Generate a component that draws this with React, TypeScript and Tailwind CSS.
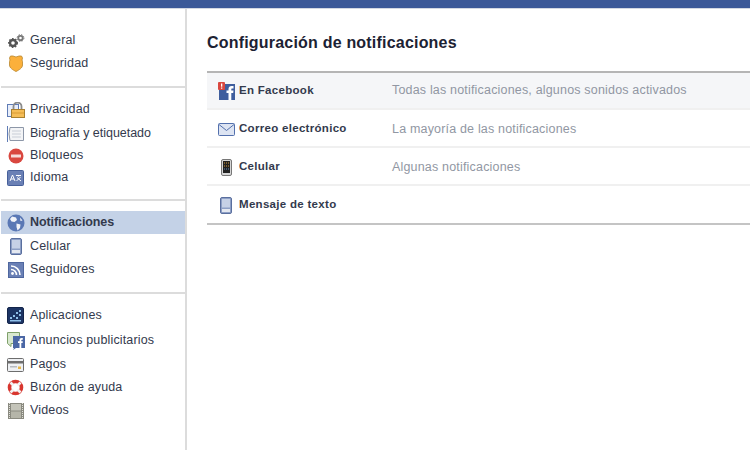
import React from "react";

const Gears = () => (
  <svg width="18" height="16" viewBox="0 0 18 16">
    <g fill="none" stroke="#555">
      <circle cx="6" cy="10" r="3" strokeWidth="2.4" />
      <circle cx="6" cy="10" r="4.4" strokeWidth="1.2" strokeDasharray="1.6 1.6" />
    </g>
    <g fill="none" stroke="#777">
      <circle cx="13.5" cy="5" r="2.2" strokeWidth="1.8" />
      <circle cx="13.5" cy="5" r="3.4" strokeWidth="1" strokeDasharray="1.4 1.3" />
    </g>
  </svg>
);

const Badge = () => (
  <svg width="16" height="17" viewBox="0 0 16 17">
    <path d="M2.500 1H5l3 1 3-1h2.500l1 2-.5 2 .5 1.500V10c0 3-3.500 5-6.500 6.500C5 15 1.500 13 1.500 10V6.500L2 5l-.5-2z" fill="#fbb03b" stroke="#b8862e" strokeWidth="0.8" />
  </svg>
);

const Lock = () => (
  <svg width="18" height="16" viewBox="0 0 18 16">
    <rect x="0.500" y="2.500" width="11" height="12" fill="#e8eefa" stroke="#5f7cb6" />
    <path d="M6.500 8V4.500a4 4 0 0 1 8 0V8" fill="none" stroke="#8b8b8b" strokeWidth="1.800" />
    <rect x="4.500" y="7.500" width="13" height="8" fill="#f5bd57" stroke="#a9802f" />
    <path d="M5 11h12" stroke="#d99a32" />
  </svg>
);

const Timeline = () => (
  <svg width="17" height="16" viewBox="0 0 17 16">
    <path d="M0.500 0v16" stroke="#5f7cb6" />
    <path d="M3 1.500h13.500v13H3l-1-6.500z" fill="#f3f4f6" stroke="#8d97a8" />
    <path d="M5 5h9M5 8h9M5 11h9" stroke="#c9ced7" />
  </svg>
);

const Block = () => (
  <svg width="16" height="16" viewBox="0 0 16 16">
    <circle cx="8" cy="8" r="7.500" fill="#d9473f" />
    <rect x="3" y="6.500" width="10" height="3" fill="#f6dcda" />
  </svg>
);

const Lang = () => (
  <svg width="17" height="16" viewBox="0 0 17 16">
    <rect x="0.500" y="0.500" width="16" height="15" rx="1" fill="#6a80b5" stroke="#47609a" />
    <path d="M3 11l2.500-6L8 11M4 9h3M9 5.500h5M11.500 5v1.500M9.500 11l4-4M10 7.500l4 3.500" fill="none" stroke="#fff" strokeWidth="1" />
  </svg>
);

const Globe = () => (
  <svg width="18" height="18" viewBox="0 0 18 18">
    <circle cx="9" cy="9" r="8.500" fill="#5a78b5" />
    <path d="M5 2.500l4 1 1 2.500-2.500 2-3-.5L3 5zM9.500 9.500l4 1-.5 3.500-2.500 2.500-1-3.500zM13 3.500l2.500 3-2 .5z" fill="#f1f3f8" />
  </svg>
);

const Phone = () => (
  <svg width="12" height="17" viewBox="0 0 12 17">
    <rect x="0.500" y="0.500" width="11" height="16" rx="1.500" fill="#8ea0c6" stroke="#5a6f9e" />
    <rect x="2" y="2" width="8" height="8.500" fill="#c6d1e6" />
    <rect x="2" y="12" width="8" height="3" fill="#e4e8f0" />
  </svg>
);

const Rss = () => (
  <svg width="16" height="16" viewBox="0 0 16 16">
    <rect x="0.500" y="0.500" width="15" height="15" fill="#6a80b5" stroke="#4f679f" />
    <circle cx="4.500" cy="11.500" r="1.400" fill="#fff" />
    <path d="M3 7.500a5.500 5.500 0 0 1 5.500 5.500M3 4a9 9 0 0 1 9 9" fill="none" stroke="#fff" strokeWidth="1.600" />
  </svg>
);

const Apps = () => (
  <svg width="17" height="17" viewBox="0 0 17 17">
    <rect x="0.500" y="0.500" width="16" height="16" rx="1.500" fill="#1d3464" stroke="#13244a" />
    <path d="M3 10h2v2H3zM6 8h2v2H6zM9 10h2v2H9zM12 3h2v2h-2zM12 7h2v2h-2zM3 13h11v1.500H3zM9 5h2v2H9z" fill="#8fc0ea" />
  </svg>
);

const AdsIcon = () => (
  <svg width="18" height="18" viewBox="0 0 18 18">
    <path d="M0.500 0.500h12v11H4v3l-3.500-3z" fill="#d8e8cf" stroke="#7fa06a" />
    <rect x="6" y="4" width="12" height="12" fill="#4b67a5" />
    <path d="M7 16l-1 2 3-2z" fill="#4b67a5" />
    <path d="M12.500 16v-5h-1.500V9.200h1.500V8c0-1.300.8-2 2-2h1.300v1.800h-.8c-.5 0-.7.2-.7.700v.700h1.500l-.2 1.800h-1.300v5z" fill="#fff" />
  </svg>
);

const Card = () => (
  <svg width="17" height="14" viewBox="0 0 17 14">
    <rect x="0.500" y="0.500" width="16" height="13" rx="1" fill="#eef0f3" stroke="#6d6d6d" />
    <rect x="1" y="3" width="15" height="2.500" fill="#6d6d6d" />
    <rect x="3" y="8" width="7" height="1.500" fill="#b5b9c0" />
    <rect x="11" y="8.500" width="3" height="2.500" fill="#e6b64a" />
  </svg>
);

const Buoy = () => (
  <svg width="17" height="17" viewBox="0 0 17 17">
    <circle cx="8.500" cy="8.500" r="6" fill="#fff" stroke="#d8362f" strokeWidth="3.600" />
    <path d="M3.500 3.500l3 3M13.500 3.500l-3 3M3.500 13.500l3-3M13.500 13.500l-3-3" stroke="#f2f2f2" strokeWidth="2.800" />
  </svg>
);

const Film = () => (
  <svg width="16" height="16" viewBox="0 0 16 16">
    <rect x="0" y="0" width="16" height="16" fill="#8a8a80" />
    <rect x="3" y="1" width="10" height="6.500" fill="#c4c4b9" />
    <rect x="3" y="8.500" width="10" height="6.500" fill="#b5b5a9" />
    <path d="M1.500 0v16M14.500 0v16" stroke="#e0e0d9" strokeWidth="1" strokeDasharray="1 1" />
  </svg>
);

const FbBadge = () => (
  <svg width="17" height="18" viewBox="0 0 17 18">
    <rect x="1" y="2" width="16" height="16" fill="#3f5e9e" />
    <path d="M10.500 18v-7H8.500V8.500h2V7c0-2 1.200-3 3-3H15.500v2.400h-1.200c-.8 0-1 .4-1 1v1.100h2.200l-.3 2.500h-1.900v7z" fill="#fff" />
    <rect x="0" y="0" width="7" height="8" rx="1" fill="#d9473f" />
    <rect x="3" y="1.500" width="1.300" height="3.200" fill="#fff" />
    <rect x="3" y="5.500" width="1.300" height="1.200" fill="#fff" />
  </svg>
);

const Mail = () => (
  <svg width="17" height="13" viewBox="0 0 17 13">
    <rect x="0.500" y="0.500" width="16" height="12" rx="1" fill="#dde4f2" stroke="#5370ad" />
    <path d="M1 1.500l7.500 6 7.500-6" fill="none" stroke="#5370ad" />
  </svg>
);

const SmartPhone = () => (
  <svg width="11" height="17" viewBox="0 0 11 17">
    <rect x="0.500" y="0.500" width="10" height="16" rx="1.500" fill="#d6d6d6" stroke="#777" />
    <rect x="2" y="2" width="7" height="12" fill="#222" />
    <path d="M3 4h1M5 4h1M7 4h1M3 7h1M5 7h1M7 7h1" stroke="#d59a3c" />
    <path d="M3 10h1M5 10h1M7 10h1" stroke="#5f8fc9" />
  </svg>
);

type NavItem = { label: string; icon: React.ReactNode; cls?: string; active?: boolean };

const groups: { pb: string; items: NavItem[] }[] = [
  {
    pb: "border-b-2 pb-[11px] mb-[10px]",
    items: [
      { label: "General", icon: <Gears /> },
      { label: "Seguridad", icon: <Badge /> },
    ],
  },
  {
    pb: "border-b-2 pb-[10px] mb-[10px]",
    items: [
      { label: "Privacidad", icon: <Lock /> },
      { label: "Biografía y etiquetado", icon: <Timeline />, cls: "mt-px tracking-[-0.03px]" },
      { label: "Bloqueos", icon: <Block />, cls: "-mt-px" },
      { label: "Idioma", icon: <Lang />, cls: "-mt-px" },
    ],
  },
  {
    pb: "border-b-2 pb-[11px] mb-[10px]",
    items: [
      { label: "Notificaciones", icon: <Globe />, active: true, cls: "font-bold tracking-[-0.1px] bg-[#c4d2e7]" },
      { label: "Celular", icon: <Phone />, cls: "mt-px" },
      { label: "Seguidores", icon: <Rss /> },
    ],
  },
  {
    pb: "",
    items: [
      { label: "Aplicaciones", icon: <Apps /> },
      { label: "Anuncios publicitarios", icon: <AdsIcon />, cls: "mt-[2px]" },
      { label: "Pagos", icon: <Card />, cls: "mt-px" },
      { label: "Buzón de ayuda", icon: <Buoy /> },
      { label: "Videos", icon: <Film /> },
    ],
  },
];

const rows = [
  { label: "En Facebook", value: "Todas las notificaciones, algunos sonidos activados", icon: <FbBadge />, cls: "bg-[#f5f6f8] h-[37px]" },
  { label: "Correo electrónico", value: "La mayoría de las notificaciones", icon: <Mail />, cls: "h-[38px] pt-[2px]" },
  { label: "Celular", value: "Algunas notificaciones", icon: <SmartPhone />, cls: "h-[38px] pt-[2px]" },
  { label: "Mensaje de texto", value: "", icon: <Phone />, cls: "h-[37px] pt-px" },
];

export default function App() {
  return (
    <div className="w-[750px] h-[450px] overflow-hidden bg-white flex flex-col font-['Liberation_Sans',Arial,sans-serif] text-[#333a4d]">
      <div className="h-[9px] shrink-0 bg-[#3b5998] border-b border-[#d3d8e2]" />
      <div className="flex flex-1 min-h-0">
        <aside className="w-[187px] shrink-0 border-r-2 border-[#dcdcdc] pt-[20px] pl-px">
          {groups.map((group, i) => (
            <div key={i} className={`border-[#dcdcdc] ${group.pb}`}>
              {group.items.map((item) => (
                <div
                  key={item.label}
                  className={`flex items-center h-[23px] text-[12.500px] ${
                    item.cls?.includes("tracking") ? "" : "tracking-[0.15px]"
                  } ${item.cls ?? ""}`}
                >
                  <span className="w-[29px] shrink-0 flex justify-center">{item.icon}</span>
                  <span>{item.label}</span>
                </div>
              ))}
            </div>
          ))}
        </aside>
        <main className="flex-1 min-w-0 pl-[20px]">
          <h1 className="text-[16px] font-bold text-[#1c2233] leading-[20px] mt-[24px] mb-[18px] tracking-[0.2px]">
            Configuración de notificaciones
          </h1>
          <div className="border-t-2 border-b-2 border-t-[#b5b5b5] border-b-[#c4c4c4] divide-y-2 divide-[#f0f0f0]">
            {rows.map((row) => (
              <div key={row.label} className={`flex items-center ${row.cls}`}>
                <span className="w-[32px] shrink-0 flex justify-center pl-[6px]">{row.icon}</span>
                <span className="w-[153px] shrink-0 text-[11.500px] font-bold text-[#333a4d] tracking-[0.3px]">
                  {row.label}
                </span>
                <span className="text-[12.500px] text-[#9197a3] tracking-[0.18px]">{row.value}</span>
              </div>
            ))}
          </div>
        </main>
      </div>
    </div>
  );
}
